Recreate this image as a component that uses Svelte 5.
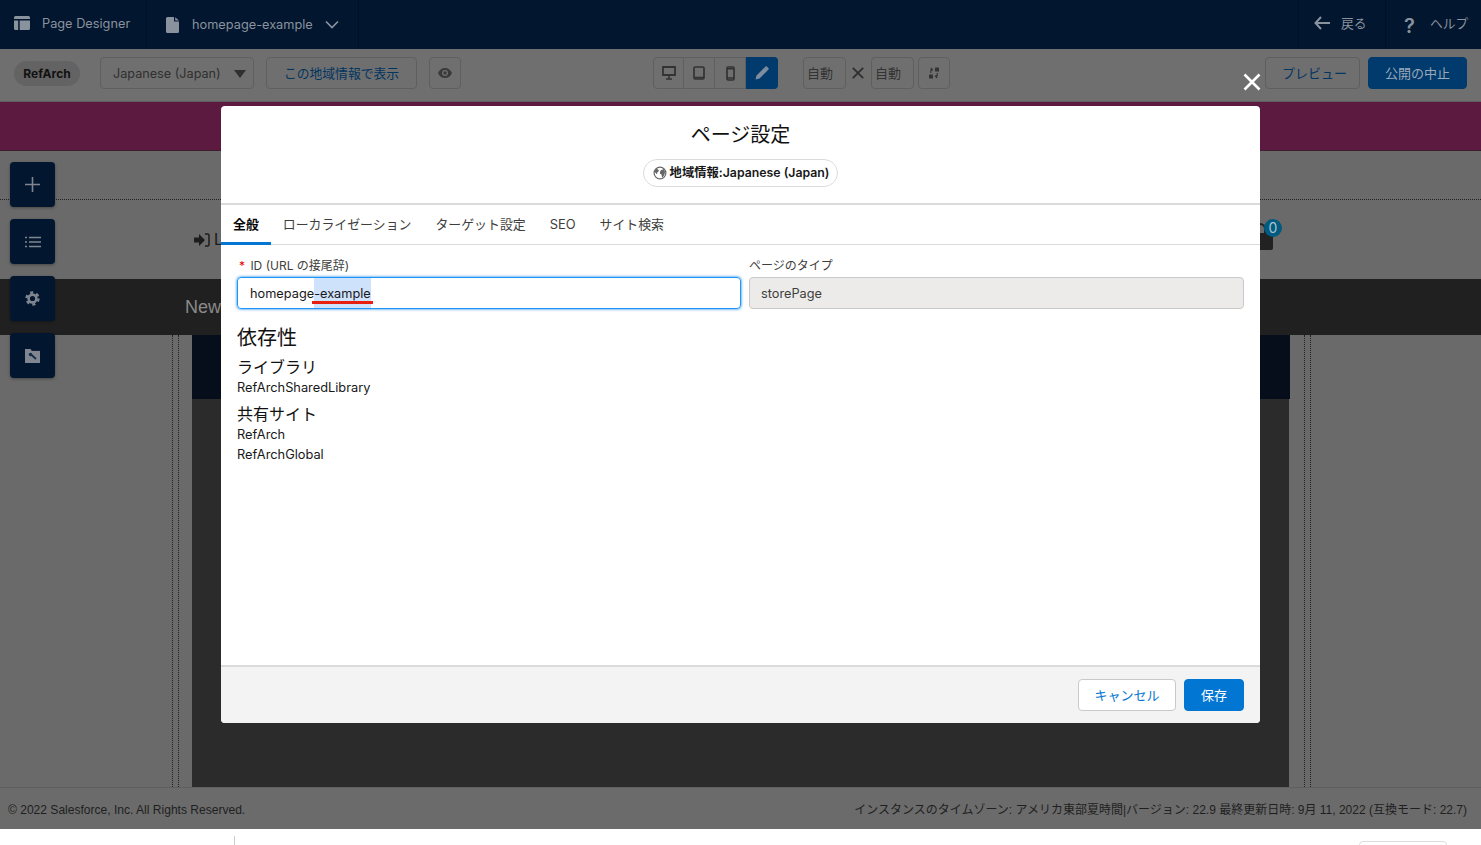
<script>
  const tabs = ['全般', 'ローカライゼーション', 'ターゲット設定', 'SEO', 'サイト検索'];
</script>

<div class="page">
  <header class="topbar">
    <div class="cell brand">
      <svg width="16" height="14" viewBox="0 0 16 14"><path d="M0 1.500A1.500 1.500 0 0 1 1.500 0h13A1.500 1.500 0 0 1 16 1.500V3H0zM0 4.500h4.200V14H1.500A1.500 1.500 0 0 1 0 12.500zM5.700 4.500H16v8A1.500 1.500 0 0 1 14.500 14H5.700z" fill="#8a929d"/></svg>
      <span>Page Designer</span>
    </div>
    <div class="cell file">
      <svg width="13" height="16" viewBox="0 0 13 16"><path d="M1.500 0H8v4.500h5V14.500A1.500 1.500 0 0 1 11.500 16h-10A1.500 1.500 0 0 1 0 14.500V1.500A1.500 1.500 0 0 1 1.500 0zM9.200 0.300L13 3.400H9.200z" fill="#8a929d"/></svg>
      <span>homepage-example</span>
      <svg class="chev" width="14" height="9" viewBox="0 0 14 9"><path d="M1 1.500l6 6 6-6" fill="none" stroke="#8a929d" stroke-width="1.700"/></svg>
    </div>
    <div class="spacer"></div>
    <div class="cell right back">
      <svg width="16" height="14" viewBox="0 0 16 14"><path d="M7 1L1.500 7 7 13M2 7h14" fill="none" stroke="#8a929d" stroke-width="2"/></svg>
      <span class="jp">戻る</span>
    </div>
    <div class="cell right help">
      <span class="q">?</span>
      <span class="jp">ヘルプ</span>
    </div>
  </header>

  <div class="toolbar">
    <div class="tb-left">
      <span class="site-pill">RefArch</span>
      <div class="tbtn locale"><span>Japanese (Japan)</span><i class="caret"></i></div>
      <div class="tbtn link view">この地域情報で表示</div>
      <div class="tbtn eye">
        <svg width="14" height="10" viewBox="0 0 14 10"><path fill-rule="evenodd" d="M7 0C3.800 0 1.200 2 0 5c1.200 3 3.800 5 7 5s5.800-2 7-5c-1.200-3-3.800-5-7-5zm0 8a3 3 0 1 1 0-6 3 3 0 0 1 0 6zm0-1.300a1.700 1.700 0 1 0 0-3.400 1.700 1.700 0 0 0 0 3.400z" fill="#3a3a3a"/></svg>
      </div>
    </div>
    <div class="tb-mid">
      <div class="devices">
        <div class="dev">
          <svg width="14" height="14" viewBox="0 0 14 14"><path d="M1 1h12v8H1z" fill="none" stroke="#333" stroke-width="1.800"/><path d="M4 13h6M7 9v4" stroke="#333" stroke-width="1.600"/></svg>
        </div>
        <div class="dev">
          <svg width="12" height="14" viewBox="0 0 12 14"><rect x="1" y="1" width="10" height="12" rx="1.200" fill="none" stroke="#333" stroke-width="1.700"/><path d="M1 11.500h10" stroke="#333" stroke-width="1.500"/></svg>
        </div>
        <div class="dev">
          <svg width="9" height="15" viewBox="0 0 9 15"><rect x="1" y="1" width="7" height="13" rx="1.200" fill="none" stroke="#333" stroke-width="1.700"/><path d="M1 12h7M1 2.800h7" stroke="#333" stroke-width="1.500"/></svg>
        </div>
        <div class="dev on">
          <svg width="14" height="14" viewBox="0 0 14 14"><path d="M0.500 13.500l1-4L9.500 1.500l3 3-8 8zM10.500 0.500l1-.3 2.300 2.300-.3 1-.9.900-3-3z" fill="#7f8d9e"/></svg>
        </div>
      </div>
      <div class="tbtn auto">自動</div>
      <svg class="times" width="12" height="12" viewBox="0 0 12 12"><path d="M.8.800l10.400 10.400M11.200.800L.8 11.200" stroke="#2d2d2d" stroke-width="1.700"/></svg>
      <div class="tbtn auto">自動</div>
      <div class="tbtn swap">
        <svg width="12" height="12" viewBox="0 0 12 12"><rect x="7" y="0.500" width="4" height="4" rx=".6" fill="#333"/><rect x="1" y="7.500" width="4" height="4" rx=".6" fill="#333"/><path d="M2.800 6V3.200h1.200L2.900 1 4.900 3.200M9.200 6v2.800H8L9.100 11 7.100 8.800" fill="none" stroke="#333" stroke-width="1.100"/></svg>
      </div>
    </div>
    <div class="tb-right">
      <div class="tbtn link preview">プレビュー</div>
      <div class="tbtn stop">公開の中止</div>
    </div>
  </div>

  <main class="canvas">
    <div class="promo"></div>
    <div class="strip"></div>
    <div class="account"></div>
    <div class="nav"></div>
    <div class="stage">
      <div class="guides left"></div>
      <div class="slot">
        <div class="hero"></div>
        <div class="slot-body"></div>
      </div>
      <div class="guides right"></div>
    </div>

    <div class="fabs">
      <div class="fab">
        <svg width="15" height="15" viewBox="0 0 15 15"><path d="M7.500 0v15M0 7.500h15" stroke="#7f8690" stroke-width="1.600"/></svg>
      </div>
      <div class="fab">
        <svg width="16" height="12" viewBox="0 0 16 12"><path d="M4 1.500h12M4 6h12M4 10.500h12" stroke="#7f8690" stroke-width="1.400"/><path d="M0 1.500h2M0 6h2M0 10.500h2" stroke="#7f8690" stroke-width="1.600"/></svg>
      </div>
      <div class="fab">
        <svg width="15" height="15" viewBox="0 0 15 15"><circle cx="7.500" cy="7.500" r="3.900" fill="none" stroke="#7f8690" stroke-width="2.600"/><circle cx="7.500" cy="7.500" r="6" fill="none" stroke="#7f8690" stroke-width="2.400" stroke-dasharray="3.100 3.183"/></svg>
      </div>
      <div class="fab">
        <svg width="15" height="14" viewBox="0 0 15 14"><path d="M0 0h5.500l1.500 1.800h8V14H0z" fill="#7f8690"/><path d="M6 5.500l5 4.500" stroke="#142a45" stroke-width="1.700"/><circle cx="5.500" cy="5.500" r="1.700" fill="#142a45"/><path d="M6.500 1.200H15" stroke="#02162f" stroke-width=".8"/></svg>
      </div>
    </div>

    <div class="login-mark">
      <svg width="16" height="14" viewBox="0 0 16 14"><path d="M0 4.500h5V1l6 6-6 6V9.500H0z" fill="#1c1c1c"/><path d="M11 1h2.500A1.500 1.500 0 0 1 15 2.500v9a1.500 1.500 0 0 1-1.500 1.500H11" fill="none" stroke="#1c1c1c" stroke-width="1.500"/></svg>
      <span>Login</span>
    </div>
    <div class="nav-word">New</div>
    <div class="cart">
      <span class="handle"></span>
      <span class="bag"></span>
      <span class="badge">0</span>
    </div>
  </main>

  <footer class="foot">
    <span class="copy">© 2022 Salesforce, Inc. All Rights Reserved.</span>
    <span class="meta">インスタンスのタイムゾーン: アメリカ東部夏時間|バージョン: 22.9 最終更新日時: 9月 11, 2022 (互換モード: 22.7)</span>
  </footer>
  <div class="under">
    <i class="under-rule"></i>
    <i class="under-btn"></i>
  </div>
</div>

<button class="close" aria-label="閉じる">
  <svg width="18" height="18" viewBox="0 0 18 18"><path d="M1.500 1.500l15 15M16.500 1.500l-15 15" stroke="#fff" stroke-width="2.600"/></svg>
</button>

<section class="modal">
  <div class="m-head">
    <h2>ページ設定</h2>
    <div class="locale-pill">
      <svg width="14" height="14" viewBox="0 0 14 14"><circle cx="7" cy="7" r="5.900" fill="none" stroke="#666" stroke-width="1.200"/><path d="M3 3l2 .3 1 1.500-1.500 1.500-.7 2L2.200 6.500 1.800 5zM8 4.300l2.800-1.300 1.300 3-.6 2.500-1.500 2.500L9 11.500l-.5-3-1.700-1 .3-2z" fill="#666"/></svg>
      <span>地域情報:Japanese (Japan)</span>
    </div>
  </div>
  <nav class="tabs">
    {#each tabs as t, i}
      <span class="tab" class:active={i === 0}>{t}</span>
    {/each}
  </nav>
  <div class="m-body">
    <div class="fields">
      <div class="field">
        <div class="label"><span class="req">*</span> ID (URL の接尾辞)</div>
        <div class="input focus">
          <span>homepage<span class="sel">-example</span></span>
        </div>
      </div>
      <div class="field">
        <div class="label plain">ページのタイプ</div>
        <div class="input off">storePage</div>
      </div>
    </div>
    <h3>依存性</h3>
    <h4>ライブラリ</h4>
    <p>RefArchSharedLibrary</p>
    <h4>共有サイト</h4>
    <p>RefArch</p>
    <p>RefArchGlobal</p>
  </div>
  <div class="m-foot">
    <button class="btn neutral">キャンセル</button>
    <button class="btn brand-btn">保存</button>
  </div>
</section>

<style>
  :global(body) {
    margin: 0;
    overflow: hidden;
    background: #fff;
    font-family: Inter, "Noto Sans CJK JP", sans-serif;
    color: #181818;
  }
  .page {
    position: relative;
    height: 845px;
    display: flex;
    flex-direction: column;
    overflow: hidden;
  }
  .topbar {
    height: 49px;
    flex: none;
    display: flex;
    background: #02162f;
    color: #8a929d;
    font-size: 12.750px;
  }
  .cell {
    display: flex;
    align-items: center;
    border-right: 1px solid #011024;
    box-sizing: border-box;
  }
  .brand { width: 147px; padding-left: 14px; gap: 12px; padding-bottom: 3px; }
  .file { width: 212px; padding-left: 19px; gap: 14px; }
  .file span { margin: 0 -2px 0 -1px; }
  .spacer { flex: 1; }
  .right { border-right: none; border-left: 1px solid #011024; gap: 11px; padding-bottom: 3px; }
  .back { width: 87px; padding-left: 15px; font-size: 12.800px; }
  .help { width: 96px; padding-left: 14px; font-size: 12.800px; }
  .jp { position: relative; top: -1px; }
  .q { font-size: 20px; width: 19px; text-align: center; font-weight: 600; position: relative; top: 3px; }

  .toolbar {
    height: 53px;
    flex: none;
    box-sizing: border-box;
    background: #6f6f6f;
    border-bottom: 1px solid #5f5f5f;
    position: relative;
    display: flex;
    align-items: flex-start;
    justify-content: space-between;
    padding: 8px 14px 0;
    font-size: 12.650px;
    color: #2f2f2f;
  }
  .tb-left, .tb-right { display: flex; align-items: center; height: 32px; }
  .tb-mid { display: flex; align-items: center; height: 32px; position: absolute; left: 653px; top: 8px; }
  .tb-right { gap: 8px; }
  .site-pill {
    background: #636363;
    border-radius: 13px;
    width: 66px;
    text-align: center;
    height: 25px;
    line-height: 25px;
    font-size: 12px;
    font-weight: 700;
    color: #111;
    margin-right: 20px;
    box-sizing: border-box;
  }
  .tbtn {
    height: 32px;
    box-sizing: border-box;
    border: 1px solid #5f5f5f;
    border-radius: 4px;
    display: flex;
    align-items: center;
    justify-content: center;
  }
  .locale { width: 154px; justify-content: flex-start; padding-left: 12px; margin-right: 12px; position: relative; }
  .caret {
    position: absolute; right: 7px; top: 12px;
    border-left: 6.500px solid transparent;
    border-right: 6.500px solid transparent;
    border-top: 8px solid #2f2f2f;
  }
  .link { color: #02355f; padding-bottom: 2px; }
  .view { width: 151px; margin-right: 12px; font-size: 12.800px; }
  .eye { width: 32px; }
  .devices { display: flex; height: 32px; margin-right: 25px; }
  .dev {
    width: 31px;
    box-sizing: border-box;
    border: 1px solid #5f5f5f;
    border-left: none;
    display: flex; align-items: center; justify-content: center;
  }
  .dev:first-child { border-left: 1px solid #5f5f5f; border-radius: 4px 0 0 4px; }
  .dev.on { background: #013a6d; border-color: #013a6d; border-radius: 0 4px 4px 0; width: 32px; }
  .auto { width: 43px; font-size: 13px; color: #333; justify-content: flex-start; padding: 0 0 2px 3px; }
  .times { margin: 0 7px 0 6px; }
  .swap { width: 32px; margin-left: 4px; }
  .preview { width: 95px; font-size: 13px; padding-left: 4px; }
  .stop { width: 99px; background: #013a6d; border-color: #013a6d; color: #9aa9ba; font-size: 13px; padding-bottom: 2px; }

  .canvas {
    position: relative;
    flex: 1;
    min-height: 0;
    display: flex;
    flex-direction: column;
    background: #6a6a6a;
    font-family: "Liberation Sans", sans-serif;
  }
  .promo { height: 48px; flex: none; background: #5c1a40; border-bottom: 1px dotted #222; }
  .strip { height: 48px; flex: none; border-bottom: 1px dotted #222; }
  .account { height: 79px; flex: none; }
  .nav { height: 56px; flex: none; background: #202020; }
  .stage { flex: 1; display: flex; justify-content: flex-start; min-height: 0; }
  .guides { width: 5px; flex: none; border-left: 1px dotted #222; border-right: 1px dotted #222; }
  .guides.left { margin-left: 172px; margin-right: 13px; }
  .guides.right { margin-left: 14px; }
  .slot { width: 1098px; flex: none; display: flex; flex-direction: column; }
  .hero { height: 64px; flex: none; background: #060d1b; }
  .slot-body { flex: 1; background: #2b2b2b; margin-right: 1px; }

  .fabs {
    position: absolute; left: 10px; top: 60px;
    display: flex; flex-direction: column; gap: 12px;
  }
  .fab {
    width: 45px; height: 45px;
    background: #02162f;
    border-radius: 4px;
    display: flex; align-items: center; justify-content: center;
    box-shadow: 0 1px 3px rgba(0,0,0,.35);
  }
  .login-mark {
    position: absolute; left: 194px; top: 129px;
    display: flex; align-items: center; gap: 4px;
    font-size: 16px; color: #1c1c1c;
  }
  .nav-word { position: absolute; left: 185px; top: 195px; font-size: 18px; color: #8a8a8a; }
  .cart { position: absolute; left: 1240px; top: 117px; }
  .handle {
    position: absolute; left: 12px; top: 4px; width: 10px; height: 12px;
    border: 2px solid #222; border-bottom: none; border-radius: 6px 6px 0 0;
  }
  .bag {
    position: absolute; left: 8px; top: 14px; width: 25px; height: 17px;
    background: #222; border-radius: 0 0 2px 2px;
  }
  .badge {
    position: absolute; left: 24px; top: 0;
    width: 18px; height: 18px; border-radius: 50%;
    background: #015a80; color: #a9c4d1;
    font: 14px/18px Inter, sans-serif; text-align: center;
  }

  .foot {
    height: 42px;
    flex: none;
    box-sizing: border-box;
    background: #6b6b6b;
    border-top: 1px solid #5f5f5f;
    display: flex;
    align-items: center;
    justify-content: space-between;
    padding: 1px 14px 0 8px;
    font-family: "Liberation Sans", "Noto Sans CJK JP", sans-serif;
    font-size: 12.050px;
    color: #1f1f1f;
  }
  .copy { padding-top: 2px; }
  .meta { font-size: 12px; padding-bottom: 1px; }
  .under { height: 16px; flex: none; background: #fff; position: relative; }
  .under-rule { position: absolute; left: 234px; top: 7px; width: 1px; height: 9px; background: #ccc; }
  .under-btn { position: absolute; left: 1359px; top: 12px; width: 88px; height: 8px; border: 1px solid #ddd; border-radius: 4px; box-sizing: border-box; }

  .close {
    position: absolute; left: 1243px; top: 73px;
    width: 18px; height: 18px; padding: 0; border: 0; background: none;
    display: block;
  }
  .close svg { display: block; }

  .modal {
    position: absolute;
    left: 221px; top: 106px;
    width: 1039px; height: 617px;
    background: #fff;
    border-radius: 4px;
    display: flex;
    flex-direction: column;
    overflow: hidden;
  }
  .m-head {
    height: 99px;
    flex: none;
    box-sizing: border-box;
    border-bottom: 2px solid #dddbda;
    display: flex;
    flex-direction: column;
    align-items: center;
    padding-top: 17px;
  }
  h2 { margin: 0; font-size: 20px; font-weight: 400; line-height: 25px; color: #111; }
  .locale-pill {
    margin-top: 11px;
    height: 28px;
    box-sizing: border-box;
    border: 1px solid #dddbda;
    border-radius: 14px;
    padding: 0 8px 2px 9px;
    display: flex;
    align-items: center;
    gap: 3px;
    font-size: 12.300px;
    font-weight: 600;
  }
  .locale-pill svg { position: relative; top: 1px; }
  .tabs {
    height: 40px;
    flex: none;
    box-sizing: border-box;
    border-bottom: 1px solid #dddbda;
    display: flex;
    gap: 24px;
    padding-left: 12px;
    font-size: 12.900px;
    color: #3e3e3c;
  }
  .tab { line-height: 40px; position: relative; height: 39px; }
  .tab.active { color: #080707; font-weight: 700; }
  .tab.active::after {
    content: ""; position: absolute; left: -12px; right: -12px; bottom: -1px; height: 3px; background: #0176d3;
  }
  .m-body { flex: 1; min-height: 0; padding: 13px 16px 0; box-sizing: border-box; }
  .fields { display: grid; grid-template-columns: 504px 495px; gap: 8px; }
  .label { font-size: 12px; line-height: 16px; color: #3e3e3c; margin-bottom: 3px; }
  .req { color: #e60000; margin: 0 2px; }
  .input {
    height: 32px;
    box-sizing: border-box;
    border: 1px solid #c9c9c9;
    border-radius: 4px;
    padding: 0 12px;
    display: flex;
    align-items: center;
    font-size: 12.750px;
  }
  .focus { border-color: #1b96ff; box-shadow: 0 0 3px #0176d3; color: #181818; }
  .off { background: #ecebea; color: #3e3e3c; padding-left: 11px; }
  .sel {
    background: #cfe2fb;
    display: inline-block;
    line-height: 32px;
    height: 30px;
    position: relative;
  }
  .sel::after {
    content: ""; position: absolute; left: -2px; right: -2px; bottom: 4px; height: 3px; background: #e8200f;
  }
  h3 { margin: 16px 0 0; font-size: 20px; font-weight: 400; line-height: 26px; color: #111; }
  h4 { margin: 9px 0 0; font-size: 16px; font-weight: 400; line-height: 18px; color: #111; position: relative; top: -2px; }
  p { margin: 0; font-size: 12.800px; line-height: 20px; color: #181818; }
  .m-foot {
    height: 58px;
    flex: none;
    box-sizing: border-box;
    background: #f3f3f3;
    border-top: 2px solid #dddbda;
    display: flex;
    justify-content: flex-end;
    align-items: center;
    gap: 8px;
    padding: 0 16px;
  }
  .btn {
    height: 32px;
    box-sizing: border-box;
    border-radius: 4px;
    font: 13px Inter, "Noto Sans CJK JP", sans-serif;
    border: 1px solid #c9c9c9;
    padding: 0 0 2px;
  }
  .neutral { width: 98px; background: #fff; color: #0176d3; }
  .brand-btn { width: 60px; background: #0176d3; border-color: #0176d3; color: #fff; }
</style>
